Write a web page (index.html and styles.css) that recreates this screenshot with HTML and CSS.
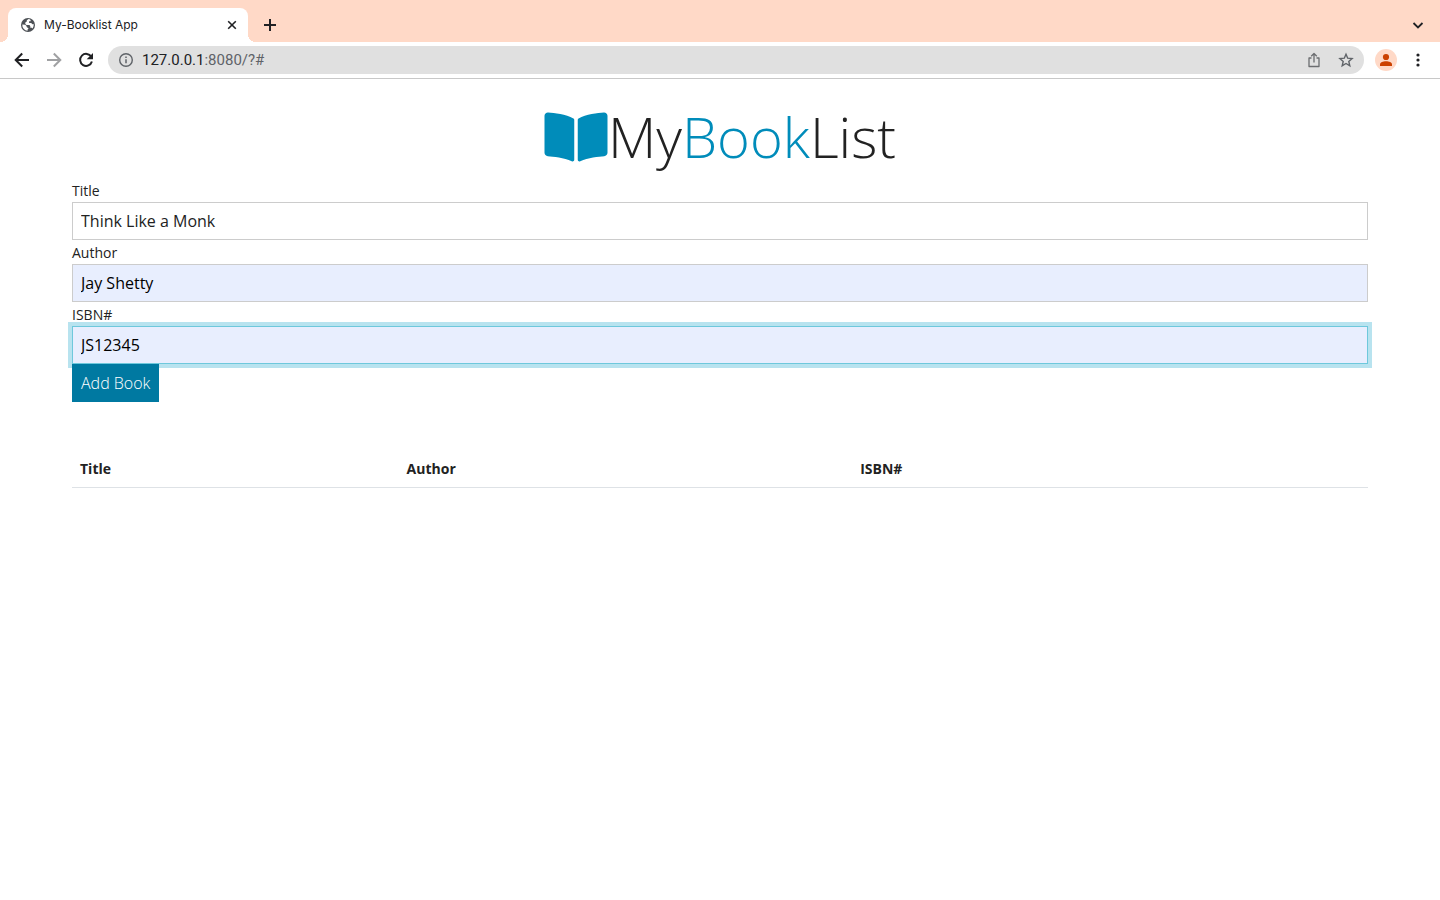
FILE: index.html
```html
<!DOCTYPE html>
<html lang="en">
<head>
<meta charset="utf-8">
<title>My-Booklist App</title>
<link rel="stylesheet" href="styles.css">
</head>
<body>
<header class="browser">
  <div class="tabstrip">
    <div class="tab">
      <svg class="globe" width="16" height="16" viewBox="0 0 16 16" aria-hidden="true">
        <circle cx="8" cy="8" r="7" fill="#4d5156"/>
        <path d="M8.600 2.100 6.800 3.300v1.300L5.300 5.600v1.500l1.200 1h3l.8 1.200v1.500h1.500l.8.800A5.700 5.700 0 0 0 13.600 7l-1.200.2-1.200-1.100H9.100V4.300h1.500V2.900A5.700 5.700 0 0 0 8.600 2.100zM2.300 7.500a5.700 5.700 0 0 0 5.300 6.200v-1.300l1-1.100-1.700-1.100-.7-1.600-1.300-.9z" fill="#fff"/>
      </svg>
      <span class="tab-title">My-Booklist App</span>
      <button class="icon-button tab-close" aria-label="Close tab">
        <svg width="16" height="16" viewBox="0 0 16 16"><path d="m4.200 4.200 7.600 7.600m0-7.600-7.600 7.600" stroke="#202124" stroke-width="1.600" fill="none"/></svg>
      </button>
    </div>
    <button class="icon-button new-tab" aria-label="New tab">
      <svg width="16" height="16" viewBox="0 0 16 16"><path d="M8 2v12M2 8h12" stroke="#202124" stroke-width="2"/></svg>
    </button>
    <button class="icon-button tab-search" aria-label="Search tabs">
      <svg width="16" height="16" viewBox="0 0 16 16"><path d="m3.500 6 4.500 4.400L12.500 6" stroke="#202124" stroke-width="1.800" fill="none"/></svg>
    </button>
  </div>
  <div class="toolbar">
    <button class="icon-button" aria-label="Back">
      <svg width="16" height="16" viewBox="0 0 16 16"><path d="M15 8H2.400M8.200 1.500 1.700 8l6.500 6.500" stroke="#202124" stroke-width="2" fill="none"/></svg>
    </button>
    <button class="icon-button" aria-label="Forward">
      <svg width="16" height="16" viewBox="0 0 16 16"><path d="M1 8h12.600M7.800 1.500 14.300 8l-6.500 6.500" stroke="#a0a1a3" stroke-width="2" fill="none"/></svg>
    </button>
    <button class="icon-button" aria-label="Reload">
      <svg width="16" height="16" viewBox="0 0 16 16"><path d="M13.300 4.800A6 6 0 1 0 13.900 9.500" stroke="#202124" stroke-width="2" fill="none"/><path d="M15 1v6.300H8.700z" fill="#202124"/></svg>
    </button>
    <div class="omnibox">
      <svg width="16" height="16" viewBox="0 0 16 16" aria-hidden="true"><circle cx="8" cy="8" r="6.300" fill="none" stroke="#5f6368" stroke-width="1.400"/><path d="M8 7.300v4M8 4.500v1.600" stroke="#5f6368" stroke-width="1.500"/></svg>
      <span class="url">127.0.0.1<span class="url-rest">:8080/?#</span></span>
      <button class="icon-button" aria-label="Share">
        <svg width="16" height="16" viewBox="0 0 16 16"><path d="M5.500 6H3v8.500h10V6h-2.500M8 10.500V2M5.200 4.300 8 1.500l2.800 2.800" stroke="#6b6d70" stroke-width="1.300" fill="none" stroke-linejoin="round"/></svg>
      </button>
      <button class="icon-button" aria-label="Bookmark this page">
        <svg width="16" height="16" viewBox="0 0 16 16"><path d="m8 2.200 1.700 4 4.400.4-3.300 2.900 1 4.300L8 11.500l-3.800 2.300 1-4.300-3.300-2.900 4.400-.4z" stroke="#5f6368" stroke-width="1.400" fill="none"/></svg>
      </button>
    </div>
    <button class="icon-button avatar" aria-label="Profile">
      <svg width="22" height="22" viewBox="0 0 22 22"><circle cx="11" cy="8" r="3.100" fill="#cc4100"/><path d="M5 17v-1.500C5 13.300 8 12.200 11 12.200s6 1.100 6 3.300V17z" fill="#cc4100"/></svg>
    </button>
    <button class="icon-button" aria-label="Menu">
      <svg width="16" height="16" viewBox="0 0 16 16"><g fill="#202124"><circle cx="8" cy="3" r="1.600"/><circle cx="8" cy="8" r="1.600"/><circle cx="8" cy="13" r="1.600"/></g></svg>
    </button>
  </div>
</header>

<main class="container">
  <h1 class="brand">
    <svg class="book" viewBox="0 0 576 512" aria-hidden="true"><path fill="currentColor" d="M542.22 32.05c-54.8 3.11-163.72 14.43-230.96 55.59-4.64 2.84-7.27 7.89-7.27 13.17v363.87c0 11.55 12.63 18.85 23.28 13.49 69.18-34.82 169.23-44.32 218.7-46.92 16.89-.89 30.02-14.43 30.02-30.66V62.75c.01-17.71-15.35-31.74-33.77-30.7zM264.73 87.64C197.5 46.48 88.58 35.17 33.78 32.05 15.36 31.01 0 45.04 0 62.75V400.6c0 16.24 13.13 29.78 30.02 30.66 49.49 2.6 149.59 12.11 218.77 46.95 10.62 5.35 23.21-1.94 23.21-13.46V100.63c0-5.29-2.62-10.14-7.27-12.99z"/></svg>
    <span>My<span class="accent">Book</span>List</span>
  </h1>
  <form class="book-form">
    <label for="title">Title</label>
    <input class="field" id="title" type="text" value="Think Like a Monk">
    <label for="author">Author</label>
    <input class="field filled" id="author" type="text" value="Jay Shetty">
    <label for="isbn">ISBN#</label>
    <input class="field filled focused" id="isbn" type="text" value="JS12345">
    <button class="submit" type="submit">Add Book</button>
  </form>
  <table class="books">
    <thead>
      <tr><th class="col-title">Title</th><th class="col-author">Author</th><th>ISBN#</th></tr>
    </thead>
    <tbody></tbody>
  </table>
</main>
</body>
</html>
```
FILE: styles.css
```css
* {
  box-sizing: border-box;
}

body {
  margin: 0;
  background: #fff;
  color: #222;
  font-family: "Open Sans", "Noto Sans", sans-serif;
  font-size: 14px;
  line-height: 21px;
}

svg {
  display: block;
  flex: none;
}

.icon-button {
  padding: 0;
  border: 0;
  background: none;
}

.browser {
  border-bottom: 1px solid #c8c8c8;
  font-family: Inter, sans-serif;
}

.tabstrip {
  display: flex;
  align-items: center;
  height: 42px;
  padding: 8px 14px 0 8px;
  background: #ffd9c7;
}

.tab {
  position: relative;
  display: flex;
  align-items: center;
  gap: 8px;
  width: 240px;
  height: 34px;
  padding: 0 8px 0 12px;
  border-radius: 8px 8px 0 0;
  background: #fff;
}

.tab::before,
.tab::after {
  content: "";
  position: absolute;
  bottom: 0;
  width: 8px;
  height: 8px;
}

.tab::before {
  right: 100%;
  background: radial-gradient(circle at 0 0, #ffd9c7 8px, #fff 8px);
}

.tab::after {
  left: 100%;
  background: radial-gradient(circle at 100% 0, #ffd9c7 8px, #fff 8px);
}

.tab-title {
  flex: 1;
  font-size: 12px;
  line-height: 18px;
  color: #202124;
}

.new-tab {
  margin-left: 14px;
}

.tab-search {
  margin-left: auto;
}

.toolbar {
  display: flex;
  align-items: center;
  gap: 16px;
  height: 36px;
  padding: 0 14px;
}

.omnibox {
  display: flex;
  flex: 1;
  align-items: center;
  gap: 16px;
  height: 28px;
  margin-left: -2px;
  padding: 0 10px;
  border-radius: 14px;
  background: #e0e0e0;
}

.url {
  flex: 1;
  margin-left: -8px;
  font-family: Roboto, sans-serif;
  font-size: 15px;
  color: #202124;
}

.url-rest {
  color: #5f6368;
}

.avatar {
  margin: 0 -3px 0 -5px;
  border-radius: 50%;
  background: #ffd9c7;
}

.container {
  padding: 24px 5%;
}

.brand {
  display: flex;
  align-items: center;
  justify-content: center;
  margin: 0 0 8px;
  font-size: 56px;
  font-weight: 300;
  line-height: 67px;
}

.book {
  width: 64px;
  height: 56px;
  color: #008cba;
}

.accent {
  color: #008cba;
}

.book-form label {
  display: block;
  height: 24px;
  padding-top: 2px;
}

.field,
.submit {
  height: 38px;
  padding: 0 8px;
  font-family: inherit;
  font-size: 16px;
}

.field {
  display: block;
  width: 100%;
  border: 1px solid #ccc;
  border-radius: 0;
  outline: 0;
  background: #fff;
  color: #222;
}

.filled {
  background: #e8eefe;
  color: #000;
}

.focused {
  border-color: #6ec8dc;
  box-shadow: 0 0 0 4px #b8e3ef;
}

.submit {
  position: relative;
  display: block;
  border: 1px solid #0079a1;
  background: #0079a1;
  color: #fff;
  font-weight: 300;
}

.books {
  width: 100%;
  margin-top: 48px;
  border-collapse: collapse;
  table-layout: fixed;
}

.books th {
  padding: 8px;
  border-bottom: 1px solid #dee2e6;
  text-align: left;
  font-weight: 700;
}

.col-title {
  width: 25.2%;
}

.col-author {
  width: 35%;
}
```
